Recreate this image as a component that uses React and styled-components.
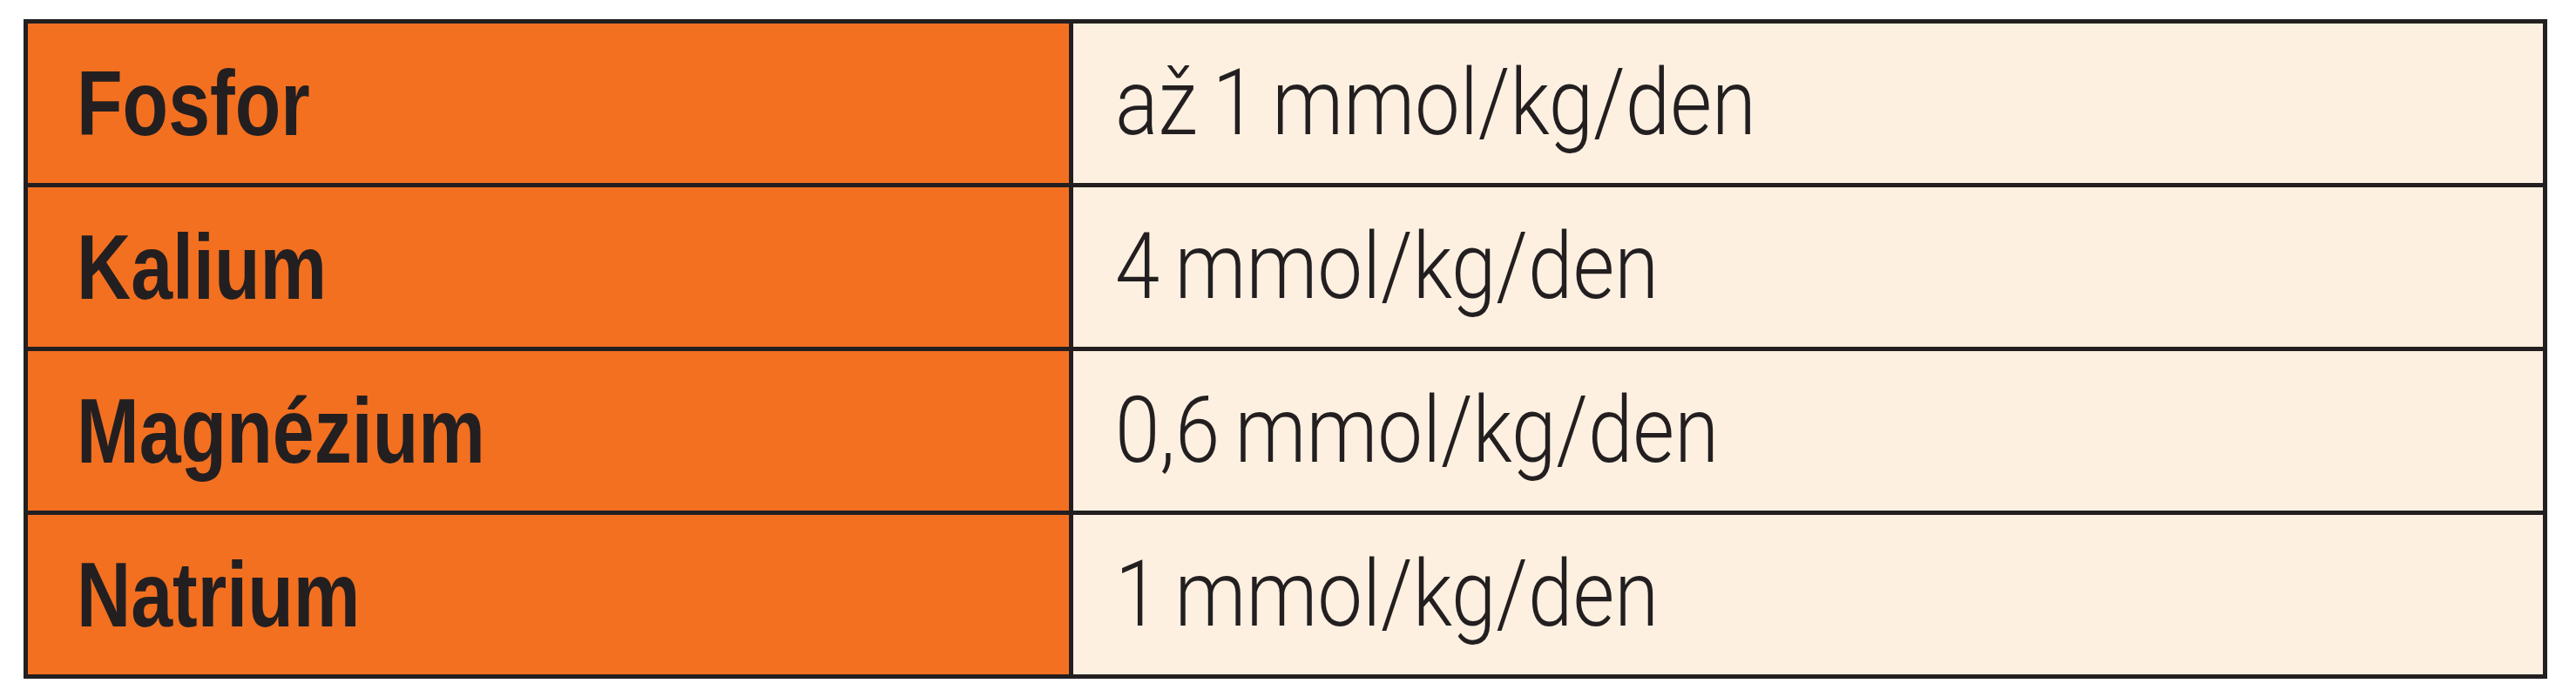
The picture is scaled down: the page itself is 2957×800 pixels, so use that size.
import React from "react";
import styled, { createGlobalStyle } from "styled-components";

const GlobalStyle = createGlobalStyle`
  html, body {
    margin: 0;
    padding: 0;
    background: #ffffff;
  }
  body {
    font-family: "Liberation Sans", Arial, sans-serif;
    color: #231f20;
  }
`;

const Page = styled.div`
  padding: 22px 0 0 27px;
`;

const Table = styled.table`
  width: 2897px;
  border-collapse: separate;
  border-spacing: 5px;
  background: #231f20;
`;

const Cell = styled.td`
  box-sizing: border-box;
  height: 183px;
  padding: 0 0 0 ${(p) => p.$inset}px;
  vertical-align: middle;
  text-align: left;
  line-height: 1;
  white-space: nowrap;
  color: #231f20;
`;

const Label = styled(Cell).attrs({ as: "th" })`
  width: 1195px;
  background: #f37021;
`;

const Value = styled(Cell)`
  background: #fdf0e0;
`;

// the print face is a narrow sans, so the installed one is squeezed
const Text = styled.span`
  display: inline-block;
  transform: scaleX(${(p) => p.$squeeze});
  transform-origin: left center;
  font-size: 105px;
`;

const LabelText = styled(Text)`
  font-family: "Liberation Sans", Arial, sans-serif;
  font-weight: 700;
`;

const ValueText = styled(Text)`
  font-family: Roboto, "Liberation Sans", Arial, sans-serif;
  font-weight: 300;
  word-spacing: -6px;
`;

const rows = [
  { name: "Fosfor", dose: "až 1 mmol/kg/den" },
  { name: "Kalium", dose: "4 mmol/kg/den" },
  { name: "Magnézium", dose: "0,6 mmol/kg/den" },
  { name: "Natrium", dose: "1 mmol/kg/den" },
];

export default function App() {
  return (
    <>
      <GlobalStyle />
      <Page>
        <Table>
          <tbody>
            {rows.map((row) => (
              <tr key={row.name}>
                <Label scope="row" $inset={56}>
                  <LabelText $squeeze={0.82}>{row.name}</LabelText>
                </Label>
                <Value $inset={48}>
                  <ValueText $squeeze={0.88}>{row.dose}</ValueText>
                </Value>
              </tr>
            ))}
          </tbody>
        </Table>
      </Page>
    </>
  );
}
